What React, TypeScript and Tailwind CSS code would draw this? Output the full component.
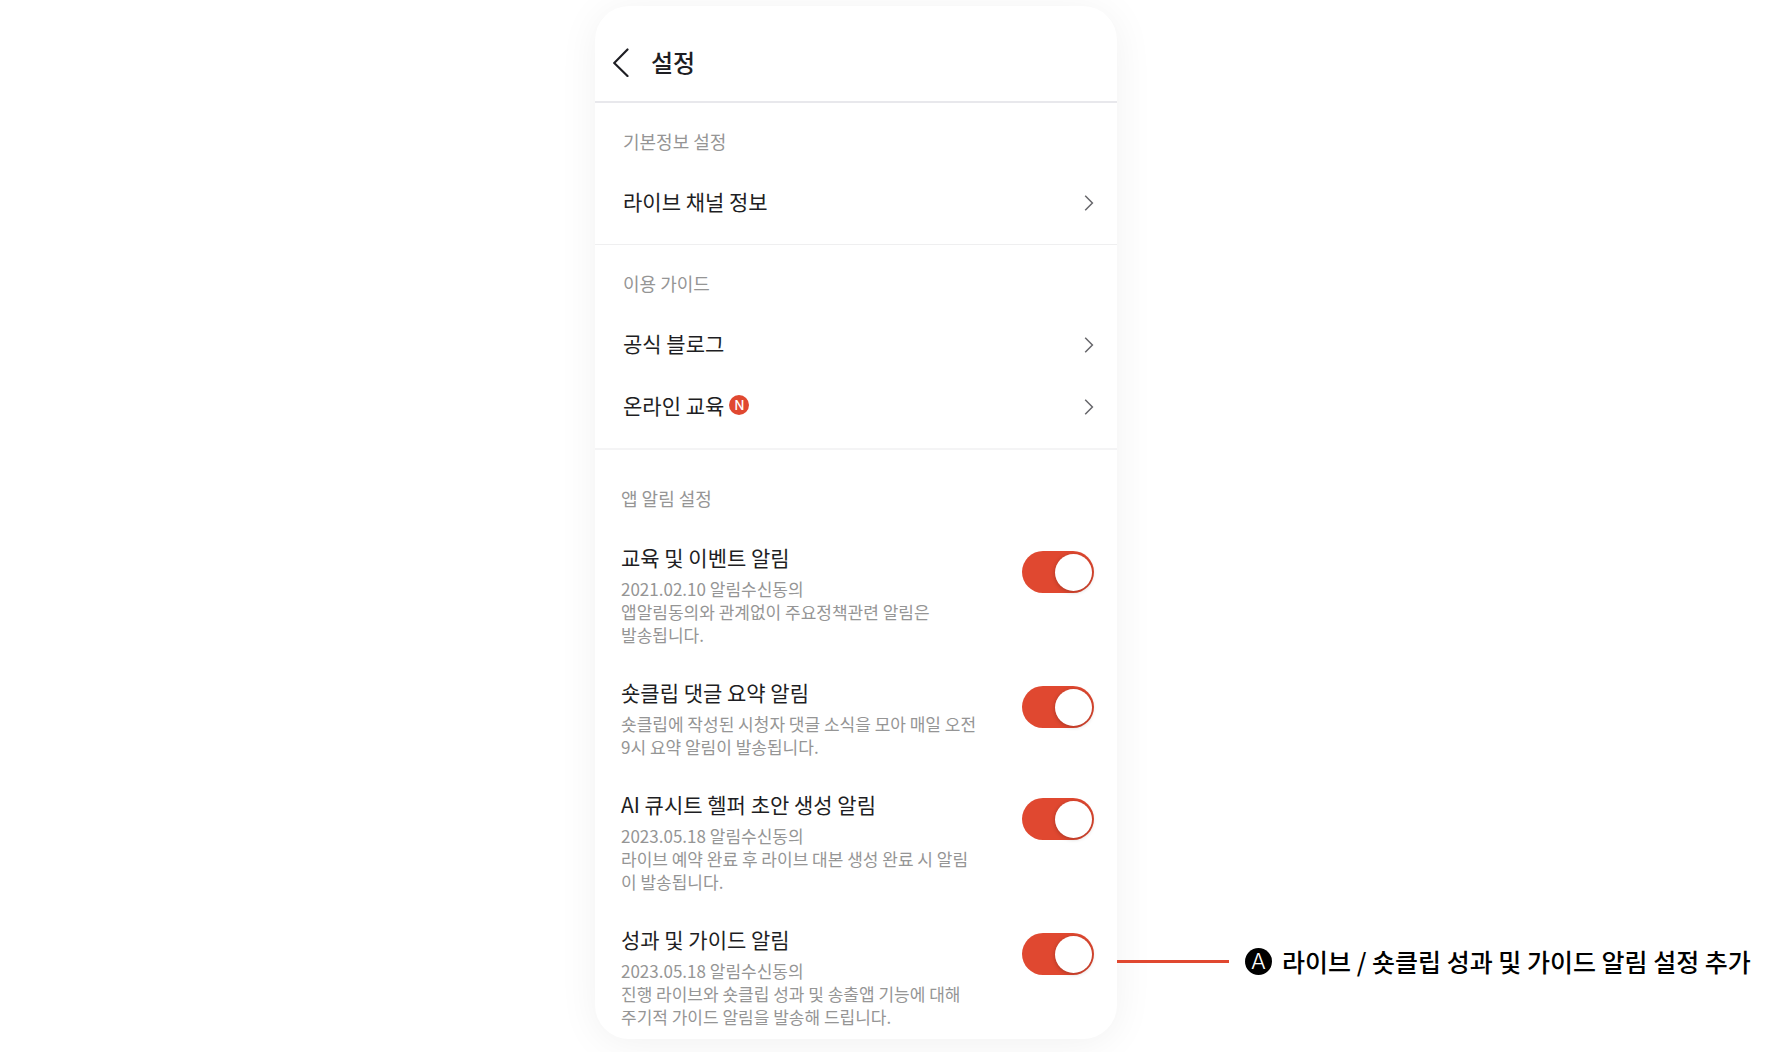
import { useState } from "react";

interface AlarmSetting {
    id: string;
    title: string;
    desc: string;
}

const GUIDE_LINKS = [
    { label: "공식 블로그", isNew: false },
    { label: "온라인 교육", isNew: true },
];

const ALARMS: AlarmSetting[] = [
    {
        id: "event",
        title: "교육 및 이벤트 알림",
        desc: "2021.02.10 알림수신동의\n앱알림동의와 관계없이 주요정책관련 알림은\n발송됩니다.",
    },
    {
        id: "comment",
        title: "숏클립 댓글 요약 알림",
        desc: "숏클립에 작성된 시청자 댓글 소식을 모아 매일 오전\n9시 요약 알림이 발송됩니다.",
    },
    {
        id: "cuesheet",
        title: "AI 큐시트 헬퍼 초안 생성 알림",
        desc: "2023.05.18 알림수신동의\n라이브 예약 완료 후 라이브 대본 생성 완료 시 알림\n이 발송됩니다.",
    },
    {
        id: "guide",
        title: "성과 및 가이드 알림",
        desc: "2023.05.18 알림수신동의\n진행 라이브와 숏클립 성과 및 송출앱 기능에 대해\n주기적 가이드 알림을 발송해 드립니다.",
    },
];

function SectionLabel({ children }: { children: string }) {
    return <h2 className="text-[18px] leading-7 text-[#959595]">{children}</h2>;
}

function LinkRow({ label, isNew }: { label: string; isNew?: boolean }) {
    return (
        <a href="#" className="flex items-center justify-between text-[21px] leading-7 text-[#1e1e23]">
            <span className="flex items-center gap-[5px]">
                {label}
                {isNew && (
                    <span className="flex size-5 items-center justify-center rounded-full bg-[#e04830] font-[Inter,sans-serif] text-[13px] leading-5 font-medium text-white">
                        N
                    </span>
                )}
            </span>
            <svg className="mt-1 h-4 w-[10px]" viewBox="0 0 10 16" fill="none" stroke="#66666a" strokeWidth="1.5">
                <path d="M1.2 0.8 8.4 8 1.2 15.2" />
            </svg>
        </a>
    );
}

function AlarmRow({ alarm }: { alarm: AlarmSetting }) {
    const [on, setOn] = useState(true);

    return (
        <li className="flex items-start justify-between gap-4">
            <div>
                <label htmlFor={alarm.id} className="block text-[21px] leading-7 text-[#1e1e23]">
                    {alarm.title}
                </label>
                <p className="mt-1.5 text-[17px] leading-[23px] whitespace-pre-line text-[#959595]">{alarm.desc}</p>
            </div>
            <input
                id={alarm.id}
                type="checkbox"
                role="switch"
                checked={on}
                onChange={(e) => setOn(e.target.checked)}
                className="mt-2 flex h-[42px] w-[72px] shrink-0 cursor-pointer appearance-none items-center rounded-full bg-gray-300 px-0.5 after:size-[37px] after:rounded-full after:bg-white after:shadow-[0_1px_4px_rgba(0,0,0,0.25)] after:content-[''] checked:justify-end checked:bg-[#e04830]"
            />
        </li>
    );
}

export default function App() {
    return (
        <div className="grid min-h-screen grid-cols-[595fr_522fr_667fr] content-start overflow-hidden bg-white pt-1.5 font-['Noto_Sans_CJK_KR',sans-serif]">
            <main className="col-start-2 rounded-[34px] bg-white shadow-[0_4px_40px_rgba(0,0,0,0.06)]">
                <header className="flex items-center gap-[22px] border-b-2 border-[#e8e8ec] pt-[38px] pb-[21px] pl-[18px]">
                    <button type="button" aria-label="뒤로" className="cursor-pointer">
                        <svg className="h-[30px] w-4" viewBox="0 0 16 30" fill="none" stroke="#1e1e23" strokeWidth="2.2" strokeLinecap="round">
                            <path d="M14.5 2.5 1.2 16 14.5 29" />
                        </svg>
                    </button>
                    <h1 className="text-[24px] leading-9 font-medium text-[#1e1e23]">설정</h1>
                </header>

                <section className="border-b border-[#efeff0] pt-6 pr-[23px] pb-[29px] pl-7">
                    <SectionLabel>기본정보 설정</SectionLabel>
                    <nav className="mt-8">
                        <LinkRow label="라이브 채널 정보" />
                    </nav>
                </section>

                <section className="border-b-2 border-[#f4f4f5] pt-6 pr-[23px] pb-[29px] pl-7">
                    <SectionLabel>이용 가이드</SectionLabel>
                    <nav className="mt-8 flex flex-col gap-[34px]">
                        {GUIDE_LINKS.map((link) => (
                            <LinkRow key={link.label} label={link.label} isNew={link.isNew} />
                        ))}
                    </nav>
                </section>

                <section className="pt-[34px] pr-[23px] pb-[11px] pl-[26px]">
                    <SectionLabel>앱 알림 설정</SectionLabel>
                    <ul className="mt-[31px] flex flex-col gap-8">
                        {ALARMS.map((alarm) => (
                            <AlarmRow key={alarm.id} alarm={alarm} />
                        ))}
                    </ul>
                </section>
            </main>

            {/* Callout for the last alarm row */}
            <aside className="flex items-center self-end pb-[60px]">
                <span className="h-[3px] w-28 shrink-0 bg-[#e04830]" />
                <span className="ml-4 flex size-[27px] shrink-0 items-center justify-center rounded-full bg-black font-[Inter,sans-serif] text-[22px] leading-[27px] font-light text-white">
                    A
                </span>
                <p className="ml-2.5 text-[25px] leading-9 font-medium whitespace-nowrap text-black">
                    라이브 / 숏클립 성과 및 가이드 알림 설정 추가
                </p>
            </aside>
        </div>
    );
}
